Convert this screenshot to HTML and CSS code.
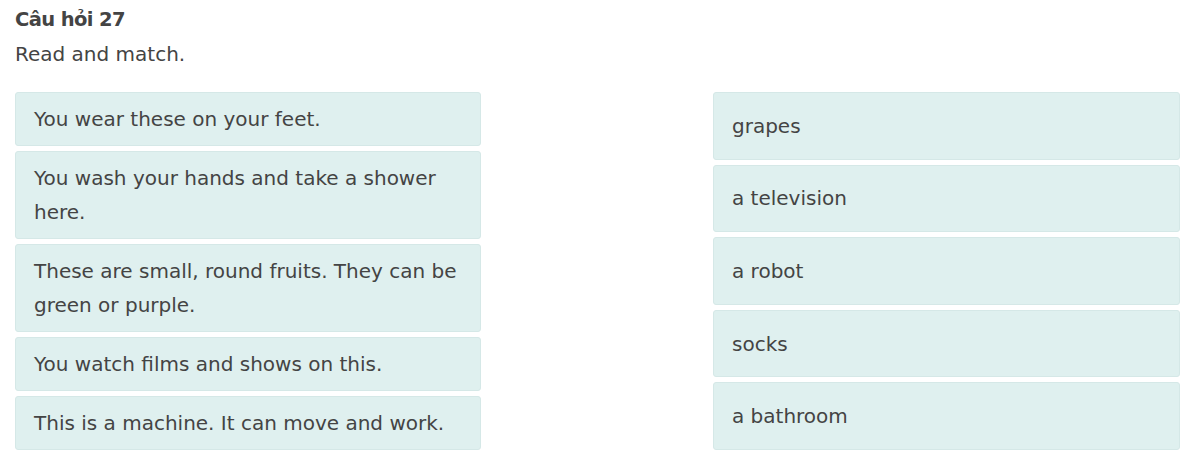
FILE: index.html
```html
<!DOCTYPE html>
<html>
<head>
<meta charset="utf-8">
<link rel="stylesheet" href="styles.css">
</head>
<body>
<div class="question">
  <div class="q-title">Câu hỏi 27</div>
  <div class="q-text">Read and match.</div>
  <div class="match">
    <div class="col">
      <div class="item">You wear these on your feet.</div>
      <div class="item">You wash your hands and take a shower here.</div>
      <div class="item">These are small, round fruits. They can be green or purple.</div>
      <div class="item">You watch films and shows on this.</div>
      <div class="item">This is a machine. It can move and work.</div>
    </div>
    <div class="col col-right">
      <div class="item">grapes</div>
      <div class="item">a television</div>
      <div class="item">a robot</div>
      <div class="item">socks</div>
      <div class="item">a bathroom</div>
    </div>
  </div>
</div>
</body>
</html>
```
FILE: styles.css
```css
html, body {
  margin: 0;
  padding: 0;
  background: #ffffff;
}
body {
  font-family: "DejaVu Sans", Verdana, sans-serif;
  color: #444444;
}
.question {
  padding: 6px 9px 0 15px;
}
.q-title {
  font-weight: bold;
  font-size: 19.5px;
  letter-spacing: -0.6px;
  line-height: 28px;
}
.q-text {
  font-size: 20px;
  line-height: 28px;
  margin-top: 6px;
}
.match {
  display: grid;
  grid-template-columns: 466px 467px;
  justify-content: space-between;
  margin-top: 24px;
}
.col {
  display: flex;
  flex-direction: column;
  gap: 5px;
}
.item {
  background: #dff0ef;
  border: 1px solid #d5e8e7;
  border-radius: 3px;
  padding: 9px 18px;
  font-size: 20px;
  line-height: 34px;
}
.col-right .item {
  flex: 1;
  display: flex;
  align-items: center;
}
```
